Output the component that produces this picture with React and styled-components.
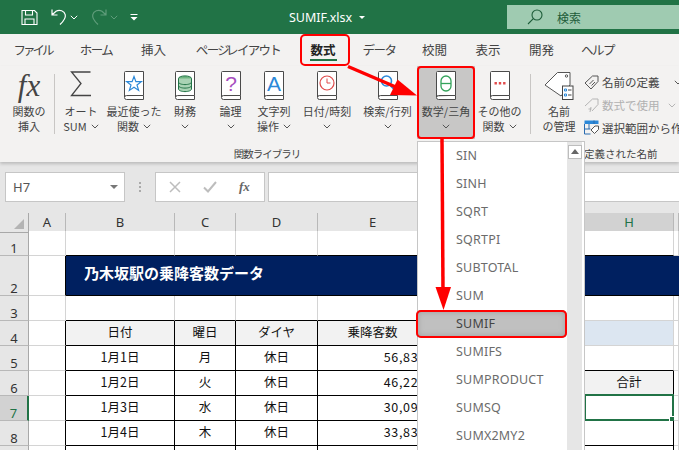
import styled, { createGlobalStyle } from 'styled-components';

const JP = `"Noto Sans CJK JP", "Noto Sans", sans-serif`;
const LATIN = `"Noto Sans", "Noto Sans CJK JP", sans-serif`;

const GlobalStyle = createGlobalStyle`
    html, body { margin: 0; padding: 0; background: #e6e6e6; }
    * { box-sizing: border-box; }
`;

const tabs = [
    { name: 'ファイル', w: 65, ls: -3 },
    { name: 'ホーム', w: 62, ls: -1.5 },
    { name: '挿入', w: 53, ls: 0 },
    { name: 'ページ レイアウト', w: 116, ls: -1.7 },
    { name: '数式', w: 54, ls: 0 },
    { name: 'データ', w: 58, ls: -1.5 },
    { name: '校閲', w: 53, ls: 0 },
    { name: '表示', w: 54, ls: 0 },
    { name: '開発', w: 53, ls: 0 },
    { name: 'ヘルプ', w: 59, ls: -1.5 },
];
const menuItems = ['SIN', 'SINH', 'SQRT', 'SQRTPI', 'SUBTOTAL', 'SUM', 'SUMIF', 'SUMIFS', 'SUMPRODUCT', 'SUMSQ', 'SUMX2MY2'];
const columns = ['A', 'B', 'C', 'D', 'E', 'F', 'G', 'H', 'I'];

const tableRows = [
    ['1月1日', '月', '休日', '56,836'],
    ['1月2日', '火', '休日', '46,229'],
    ['1月3日', '水', '休日', '30,095'],
    ['1月4日', '木', '休日', '33,839'],
];

function Chev({ color = '#555' }) {
    return (
        <svg width="8" height="5" viewBox="0 0 8 5" fill="none" stroke={color} strokeWidth="1">
            <path d="M.8.8 4 4l3.2-3.2" />
        </svg>
    );
}

function Book({ children }) {
    return (
        <svg width="22" height="29" viewBox="0 0 22 29" fill="none">
            <path d="M1.5 26V1.500a1 1 0 0 1 1-1h18v24H3.500a2 2 0 0 0-2 2 2 2 0 0 0 2 2h17v-4" fill="#fff" stroke="#4a4a4a" />
            {children}
        </svg>
    );
}

const StarBook = () => (
    <Book>
        <path d="M11 5.500l1.900 5.200h5.400l-4.300 3.300 1.600 5.400-4.600-3.200-4.600 3.200 1.600-5.400-4.300-3.300h5.400z" stroke="#2b88d8" strokeWidth="1.200" />
    </Book>
);
const MoneyBook = () => (
    <Book>
        <ellipse cx="11" cy="7.500" rx="6.500" ry="2.600" fill="#6cb47f" stroke="#217346" />
        <path d="M4.500 7.500V18c0 1.500 3 2.600 6.500 2.600s6.500-1.100 6.500-2.600V7.500M4.500 11c0 1.500 3 2.600 6.500 2.600s6.500-1.100 6.500-2.600M4.500 14.500c0 1.500 3 2.600 6.500 2.600s6.500-1.100 6.500-2.600" fill="#a9d3b4" stroke="#217346" />
    </Book>
);
const LogicBook = () => (
    <Book>
        <text x="11" y="20" textAnchor="middle" fontSize="21" fontFamily="Liberation Sans" fill="#a74fc0">?</text>
    </Book>
);
const TextBook = () => (
    <Book>
        <text x="11" y="20" textAnchor="middle" fontSize="21" fontFamily="Liberation Sans" fill="#2b88d8">A</text>
    </Book>
);
const ClockBook = () => (
    <Book>
        <circle cx="11" cy="12" r="7" fill="#fff" stroke="#e04a4a" strokeWidth="1.200" />
        <path d="M11 7.500V12h3.500" stroke="#e04a4a" />
    </Book>
);
const SearchBook = () => (
    <Book>
        <circle cx="9.500" cy="10" r="5" stroke="#2b88d8" strokeWidth="1.600" />
        <path d="M13 14l5 5" stroke="#2b88d8" strokeWidth="2" />
    </Book>
);
const ThetaBook = () => (
    <Book>
        <rect x="6" y="5" width="10" height="15" rx="5" stroke="#33a35a" strokeWidth="1.300" />
        <path d="M6 12.500h10" stroke="#33a35a" strokeWidth="1.300" />
    </Book>
);
const MoreBook = () => (
    <Book>
        <path d="M5.500 11h2.400v2.400H5.500zM9.800 11h2.400v2.400H9.800zM14.100 11h2.400v2.400h-2.400z" fill="#e04a4a" />
    </Book>
);

const ribbonButtons = [
    { w: 52, lines: ['オート', 'SUM'], chevOn: 1, icon: <svg width="22" height="26" viewBox="0 0 22 26" fill="none" stroke="#444" strokeWidth="1.300"><path d="M20.500 1H1.500L11 12.500 1.500 24.500H21" /></svg> },
    { w: 54, lines: ['最近使った', '関数'], chevOn: 1, icon: <StarBook /> },
    { w: 48, lines: ['財務'], chevOn: 2, icon: <MoneyBook /> },
    { w: 43, lines: ['論理'], chevOn: 2, icon: <LogicBook /> },
    { w: 44, lines: ['文字列', '操作'], chevOn: 1, icon: <TextBook /> },
    { w: 62, lines: ['日付/時刻'], chevOn: 2, icon: <ClockBook /> },
    { w: 59, lines: ['検索/行列'], chevOn: 2, icon: <SearchBook /> },
    { w: 58, lines: ['数学/三角'], chevOn: 2, icon: <ThetaBook />, marked: true },
    { w: 49, lines: ['その他の', '関数'], chevOn: 1, icon: <MoreBook /> },
];

export default function App() {
    function row(num, height, cells, active) {
        return (
            <SheetRow key={num} $h={height}>
                <RowHead $active={active}>{num}</RowHead>
                {cells}
            </SheetRow>
        );
    }

    function dataRow(num, values, active) {
        return row(num, 25, [
            <Cell key="a" $rb />,
            ...values.map((v, i) => <Cell key={i} $rb $bb $right={i === 3} $up>{v}</Cell>),
            <Cell key="f" />,
            <Cell key="g" $rb />,
            <Cell key="h" $rb $bb>{active && <Selection><FillHandle /></Selection>}</Cell>,
            <Cell key="i" />,
        ], active);
    }

    return (
        <Page>
            <GlobalStyle />
            <TitleBar>
                <Qat>
                    <svg width="17" height="17" viewBox="0 0 17 17" fill="none" stroke="#fff" strokeWidth="1.100">
                        <path d="M1 1.500h12.500l2.500 2.500v11.500H1zM4.500 1.500v4.500h7V1.500M4 15.500v-5.500h9v5.500" />
                    </svg>
                    <UndoWrap>
                        <svg width="16" height="18" viewBox="0 0 16 18" fill="none" stroke="#fff" strokeWidth="1.200">
                            <path d="M1 1.500V7h5.500M1.200 6.800 5 3.200c3.500-2 8.500-.4 9.300 3.600.6 3.400-1.600 6.200-5.300 9.700" />
                        </svg>
                        <Chev color="#fff" />
                    </UndoWrap>
                    <UndoWrap>
                        <svg width="16" height="18" viewBox="0 0 16 18" fill="none" stroke="#5f9c7a" strokeWidth="1.200">
                            <path d="M15 1.500V7H9.500M14.800 6.800 11 3.200C7.500 1.200 2.500 2.800 1.700 6.800c-.6 3.400 1.600 6.200 5.300 9.700" />
                        </svg>
                        <Chev color="#5f9c7a" />
                    </UndoWrap>
                    <svg width="8" height="8" viewBox="0 0 8 8" fill="#fff">
                        <path d="M.5 1h7v1h-7zM.5 4h7L4 7.500z" />
                    </svg>
                </Qat>
                <FileName>SUMIF.xlsx<FileCaret /></FileName>
                <SearchBox>
                    <svg width="16" height="16" viewBox="0 0 16 16" fill="none" stroke="#1d5c39" strokeWidth="1.100">
                        <circle cx="10" cy="6" r="5" />
                        <path d="M6.300 9.700 1 15" />
                    </svg>
                    <span>検索</span>
                </SearchBox>
            </TitleBar>

            <TabBar>
                {tabs.map((t) => (
                    <Tab key={t.name} $w={t.w} $ls={t.ls} $marked={t.name === '数式'}>{t.name}</Tab>
                ))}
            </TabBar>

            <Ribbon>
                <FormulaGroup>
                    <ButtonRow>
                        <RibbonButton $w={50}>
                            <IconSlot><FxIcon>fx</FxIcon></IconSlot>
                            <Label>関数の</Label>
                            <Label>挿入</Label>
                        </RibbonButton>
                        <VDivider />
                        {ribbonButtons.map((b) => (
                            <RibbonButton key={b.lines[0]} $w={b.w} $marked={b.marked}>
                                <IconSlot>{b.icon}</IconSlot>
                                {b.lines.map((l, i) => (
                                    <Label key={l}>{l}{b.chevOn === 1 && i === b.lines.length - 1 && <InlineChev><Chev /></InlineChev>}</Label>
                                ))}
                                {b.chevOn === 2 && <Label><Chev /></Label>}
                            </RibbonButton>
                        ))}
                    </ButtonRow>
                    <GroupLabel>関数ライブラリ</GroupLabel>
                </FormulaGroup>
                <VDivider />
                <NameGroup>
                    <ButtonRow>
                        <RibbonButton $w={50}>
                            <IconSlot>
                                <svg width="30" height="29" viewBox="0 0 30 29" fill="none">
                                    <path d="M1 14 13.500 1.500H26V14L17 25z" fill="#fff" stroke="#555" />
                                    <circle cx="22.500" cy="5" r="1.200" stroke="#555" />
                                    <rect x="18.500" y="15" width="10.500" height="13.500" fill="#fff" stroke="#444" />
                                    <path d="M20.500 18h2v2h-2zM20.500 23h2v2h-2z" stroke="#2b88d8" />
                                    <path d="M24 19h3.500M24 24h3.500" stroke="#444" />
                                </svg>
                            </IconSlot>
                            <Label>名前</Label>
                            <Label>の管理</Label>
                        </RibbonButton>
                        <SmallColumn>
                            <SmallRow>
                                <svg width="15" height="15" viewBox="0 0 15 15" fill="none" stroke="#555">
                                    <path d="M1 8 8.500 1H14v5.500L7 14zM5.500 9l4-4M7.500 10.500l3.500-3.500" />
                                </svg>
                                <span>名前の定義</span>
                                <SmallChev $gap={11}><Chev /></SmallChev>
                            </SmallRow>
                            <SmallRow $muted>
                                <svg width="15" height="15" viewBox="0 0 15 15" fill="none" stroke="#b5b5b5">
                                    <path d="M1 8 8.500 1H14v5.500L8 13" />
                                    <path d="M6 14l1-5M4.500 11h3" />
                                </svg>
                                <span>数式で使用</span>
                                <SmallChev $gap={5}><Chev color="#b5b5b5" /></SmallChev>
                            </SmallRow>
                            <SmallRow>
                                <svg width="15" height="15" viewBox="0 0 15 15" fill="none">
                                    <path d="M.5.500h14v3.500H.5z" fill="#2b88d8" />
                                    <path d="M.5 4v10h6M.5 9h6M5 4v5M10 .5V4" stroke="#2b6cb0" />
                                    <path d="M7 10l4-4h3.500v3.500l-4 4z" fill="#fff" stroke="#555" />
                                </svg>
                                <span>選択範囲から作成</span>
                            </SmallRow>
                        </SmallColumn>
                    </ButtonRow>
                    <NameLabel>定義された名前</NameLabel>
                </NameGroup>
            </Ribbon>

            <FormulaBar>
                <NameBox>
                    <span>H7</span>
                    <NameCaret />
                </NameBox>
                <Grip>
                    <i /><i /><i />
                </Grip>
                <FxBox>
                    <svg width="12" height="12" viewBox="0 0 12 12" fill="none" stroke="#bdbdbd" strokeWidth="1.500">
                        <path d="M1 1l10 10M11 1 1 11" />
                    </svg>
                    <svg width="14" height="12" viewBox="0 0 14 12" fill="none" stroke="#bdbdbd" strokeWidth="2">
                        <path d="M1 6.500 5 10.500 13 1" />
                    </svg>
                    <SmallFx>fx</SmallFx>
                </FxBox>
                <FormulaInput />
            </FormulaBar>

            <Sheet>
                <HeaderRow>
                    <Corner><CornerMark /></Corner>
                    {columns.map((c) => (
                        <ColHead key={c} $active={c === 'H'}>{c === 'I' ? '' : c}</ColHead>
                    ))}
                </HeaderRow>

                {row(1, 25, columns.map((c) => <Cell key={c} $bb={c !== 'A' && c !== 'I'} />))}
                {row(2, 40, [
                    <Cell key="a" $rb />,
                    <BannerCell key="b"><BannerText>乃木坂駅の乗降客数データ</BannerText></BannerCell>,
                    ...columns.slice(2).map((c) => <BannerCell key={c} />),
                ])}
                {row(3, 25, columns.map((c) => <Cell key={c} $bb={'BCDE'.includes(c)} />))}
                {row(4, 25, [
                    <Cell key="a" $rb />,
                    <Cell key="b" $rb $bb $bg="#f2f2f2" $up>日付</Cell>,
                    <Cell key="c" $rb $bb $bg="#f2f2f2" $up>曜日</Cell>,
                    <Cell key="d" $rb $bb $bg="#f2f2f2" $up>ダイヤ</Cell>,
                    <Cell key="e" $rb $bb $bg="#f2f2f2" $up>乗降客数</Cell>,
                    <Cell key="f" $bg="#dce6f1" />,
                    <Cell key="g" $bg="#dce6f1" />,
                    <Cell key="h" $bg="#dce6f1" />,
                    <Cell key="i" />,
                ])}
                {row(5, 25, [
                    <Cell key="a" $rb />,
                    ...tableRows[0].map((v, i) => <Cell key={i} $rb $bb $right={i === 3} $up>{v}</Cell>),
                    <Cell key="f" />,
                    <Cell key="g" />,
                    <Cell key="h" $bb />,
                    <Cell key="i" />,
                ])}
                {row(6, 25, [
                    <Cell key="a" $rb />,
                    ...tableRows[1].map((v, i) => <Cell key={i} $rb $bb $right={i === 3} $up>{v}</Cell>),
                    <Cell key="f" />,
                    <Cell key="g" $rb />,
                    <Cell key="h" $rb $bb $bg="#f2f2f2" $up>合計</Cell>,
                    <Cell key="i" />,
                ])}
                {dataRow(7, tableRows[2], true)}
                {dataRow(8, tableRows[3])}
                {dataRow('', ['', '', '', ''])}
            </Sheet>

            <FunctionMenu>
                <MenuList>
                    {menuItems.map((m) => (
                        <MenuItem key={m} $marked={m === 'SUMIF'}>{m}</MenuItem>
                    ))}
                </MenuList>
                <MenuScroll>
                    <ScrollUp />
                </MenuScroll>
            </FunctionMenu>

            <Arrows width="679" height="450" viewBox="0 0 679 450">
                <path d="M348 66.500 397 87.500" stroke="#ff0000" strokeWidth="3.500" />
                <path d="M417 95.500 390 95 397.500 79.500z" fill="#ff0000" />
                <path d="M442 139 443 290" stroke="#ff0000" strokeWidth="3.500" />
                <path d="M443.500 310 435.500 287H451z" fill="#ff0000" />
            </Arrows>
        </Page>
    );
}

const Page = styled.div`
    position: relative;
    width: 679px;
    height: 450px;
    overflow: hidden;
    background: #e6e6e6;
    font-family: ${JP};
    color: #444;
`;

const TitleBar = styled.div`
    height: 34px;
    background: #217346;
    display: flex;
    align-items: center;
    position: relative;
`;

const Qat = styled.div`
    display: flex;
    align-items: center;
    padding-left: 21px;
    gap: 13px;
    width: 289px;

    & > svg:last-child {
        margin-left: -1px;
    }
`;

const UndoWrap = styled.div`
    display: flex;
    align-items: center;
    gap: 3px;
`;

const FileName = styled.div`
    font-family: ${LATIN};
    font-size: 12.500px;
    color: #fff;
    width: 218px;
    display: flex;
    align-items: center;
`;

const FileCaret = styled.span`
    width: 0;
    height: 0;
    margin-left: 7px;
    border-left: 3px solid transparent;
    border-right: 3px solid transparent;
    border-top: 3px solid #fff;
`;

const SearchBox = styled.div`
    width: 172px;
    height: 24px;
    background: #9fcbb1;
    display: flex;
    align-items: center;
    padding-left: 20px;
    gap: 14px;
    font-size: 12px;
    color: #1d5c39;
`;

const TabBar = styled.div`
    height: 32px;
    background: #f3f2f1;
    display: flex;
`;

const Tab = styled.div`
    position: relative;
    flex: none;
    width: ${(p) => p.$w}px;
    text-align: center;
    font-size: 12.500px;
    line-height: 31px;
    letter-spacing: ${(p) => p.$ls}px;
    color: ${(p) => (p.$marked ? '#222' : '#444')};
    font-weight: ${(p) => (p.$marked ? 700 : 400)};
    white-space: nowrap;
    word-spacing: -3px;

    ${(p) => p.$marked && `
        &::before {
            content: '';
            position: absolute;
            left: 14px;
            right: 13px;
            bottom: 5px;
            height: 2px;
            background: #217346;
        }
        &::after {
            content: '';
            position: absolute;
            left: 4px;
            right: 0;
            top: 0;
            bottom: 0;
            border: 2px solid #f00;
            border-radius: 5px;
        }
    `}
`;

const Ribbon = styled.div`
    height: 96px;
    background: #f3f2f1;
    display: flex;
    padding-left: 4px;
    box-shadow: 0 2px 3px rgba(0, 0, 0, 0.18);
    position: relative;
`;

const FormulaGroup = styled.div`
    width: 526px;
    display: flex;
    flex-direction: column;
`;

const NameGroup = styled.div`
    flex: 1;
    min-width: 0;
    padding-left: 3px;
    display: flex;
    flex-direction: column;
    white-space: nowrap;
`;

const ButtonRow = styled.div`
    display: flex;
    height: 73px;
`;

const RibbonButton = styled.div`
    position: relative;
    flex: none;
    width: ${(p) => p.$w}px;
    height: 73px;
    padding-top: 5px;
    display: flex;
    flex-direction: column;
    align-items: center;
    background: ${(p) => (p.$marked ? '#c8c7c6' : 'transparent')};
    ${(p) => p.$marked && `
        &::after {
            content: '';
            position: absolute;
            inset: 0;
            border: 2px solid #f00;
            border-radius: 4px;
        }
    `}
`;

const IconSlot = styled.div`
    height: 33px;
    display: flex;
    align-items: flex-start;
    justify-content: center;
    flex: none;
`;

const FxIcon = styled.span`
    font-family: "Liberation Serif", serif;
    font-style: italic;
    font-size: 31px;
    line-height: 29px;
    color: #444;
`;

const Label = styled.div`
    font-size: 11px;
    line-height: 15px;
    height: 15px;
    color: #444;
    white-space: nowrap;
    display: flex;
    align-items: center;
    justify-content: center;
`;

const InlineChev = styled.span`
    display: inline-flex;
    margin-left: 4px;
`;

const VDivider = styled.div`
    flex: none;
    width: 1px;
    height: 60px;
    margin: 8px 0 0;
    background: #c8c6c4;
`;

const GroupLabel = styled.div`
    font-size: 10.500px;
    line-height: 14px;
    margin-top: 8px;
    letter-spacing: -1px;
    text-align: center;
    color: #444;
`;

const NameLabel = styled.div`
    font-size: 10.500px;
    line-height: 14px;
    margin-top: 8px;
    padding-left: 50px;
    color: #444;
`;

const SmallColumn = styled.div`
    padding-top: 5px;
    display: flex;
    flex-direction: column;
`;

const SmallRow = styled.div`
    display: flex;
    align-items: center;
    gap: 3px;
    height: 23px;
    font-size: 11.500px;
    color: ${(p) => (p.$muted ? '#b1b1b1' : '#444')};
`;

const SmallChev = styled.span`
    display: inline-flex;
    margin-left: ${(p) => p.$gap}px;
`;

const FormulaBar = styled.div`
    height: 51px;
    padding: 10px 0 11px 5px;
    display: flex;
`;

const NameBox = styled.div`
    width: 120px;
    background: #fff;
    border: 1px solid #c6c6c6;
    display: flex;
    align-items: center;
    justify-content: space-between;
    padding: 0 6px 0 7px;
    font-family: ${LATIN};
    font-size: 13px;
    color: #555;
`;

const NameCaret = styled.span`
    width: 0;
    height: 0;
    border-left: 4px solid transparent;
    border-right: 4px solid transparent;
    border-top: 4px solid #777;
`;

const Grip = styled.div`
    width: 30px;
    display: flex;
    flex-direction: column;
    align-items: center;
    justify-content: center;
    gap: 2px;

    i {
        width: 2px;
        height: 2px;
        background: #aaa;
    }
`;

const FxBox = styled.div`
    width: 110px;
    background: #fff;
    border: 1px solid #c6c6c6;
    display: flex;
    align-items: center;
    padding-left: 13px;
    gap: 22px;
`;

const SmallFx = styled.span`
    font-family: "Liberation Serif", serif;
    font-style: italic;
    font-weight: 700;
    font-size: 13px;
    color: #666;
`;

const FormulaInput = styled.div`
    flex: 1;
    margin-left: 3px;
    background: #fff;
    border: 1px solid #c6c6c6;
    border-right: 0;
`;

const SHEET_COLS = '29px 37px 109px 61px 82px 110px 80px 77px 89px 5px';

const Sheet = styled.div`
    width: 679px;
    background: #fff;
`;

const SheetRow = styled.div`
    display: grid;
    grid-template-columns: ${SHEET_COLS};
    height: ${(p) => p.$h}px;
`;

const HeaderRow = styled.div`
    display: grid;
    grid-template-columns: ${SHEET_COLS};
    height: 18px;
    background: #e6e6e6;
`;

const Corner = styled.div`
    position: relative;
    border-right: 1px solid #a8a8a8;
    border-bottom: 1px solid #a8a8a8;
`;

const CornerMark = styled.span`
    position: absolute;
    right: 4px;
    bottom: 3px;
    width: 0;
    height: 0;
    border-left: 10px solid transparent;
    border-bottom: 10px solid #b4b4b4;
`;

const ColHead = styled.div`
    font-family: ${LATIN};
    font-size: 13px;
    line-height: 18px;
    text-align: center;
    background: ${(p) => (p.$active ? '#d2d2d2' : 'transparent')};
    color: ${(p) => (p.$active ? '#217346' : '#333')};
    border-right: 1px solid #b8b8b8;
    border-bottom: ${(p) => (p.$active ? '2px solid #217346' : '1px solid #a8a8a8')};
`;

const RowHead = styled.div`
    font-family: ${LATIN};
    font-size: 13px;
    line-height: 13px;
    text-align: center;
    display: flex;
    align-items: flex-end;
    justify-content: center;
    background: ${(p) => (p.$active ? '#d2d2d2' : '#e6e6e6')};
    color: ${(p) => (p.$active ? '#217346' : '#333')};
    border-bottom: 1px solid #b8b8b8;
    border-right: ${(p) => (p.$active ? '2px solid #217346' : '1px solid #a8a8a8')};
`;

const Cell = styled.div`
    position: relative;
    min-width: 0;
    font-size: 12.500px;
    color: #111;
    background: ${(p) => p.$bg || '#fff'};
    border-right: 1px solid ${(p) => (p.$rb ? '#000' : '#d4d4d4')};
    border-bottom: 1px solid ${(p) => (p.$bb ? '#000' : '#d4d4d4')};
    display: flex;
    align-items: center;
    justify-content: ${(p) => (p.$right ? 'flex-end' : 'center')};
    padding-right: ${(p) => (p.$right ? '1px' : '0')};
    padding-bottom: ${(p) => (p.$up ? '4px' : '0')};
    letter-spacing: ${(p) => (p.$right ? '0.700px' : '0')};
    white-space: nowrap;
`;

const BannerCell = styled.div`
    background: #002060;
    border-bottom: 1px solid #000;
    min-width: 0;
`;

const BannerText = styled.div`
    position: relative;
    z-index: 1;
    padding: 5px 0 0 18px;
    font-size: 15px;
    line-height: 24px;
    font-weight: 700;
    color: #fff;
    white-space: nowrap;
`;

const Selection = styled.div`
    position: absolute;
    inset: -2px -1px -1px -1px;
    border: 2px solid #217346;
`;

const FillHandle = styled.span`
    position: absolute;
    right: -4px;
    bottom: -4px;
    width: 6px;
    height: 6px;
    background: #217346;
    outline: 1px solid #fff;
`;

const FunctionMenu = styled.div`
    position: absolute;
    z-index: 2;
    left: 417px;
    top: 141px;
    width: 168px;
    height: 330px;
    display: flex;
    background: #fff;
    border: 1px solid #c6c6c6;
`;

const MenuList = styled.div`
    flex: 1;
    min-width: 0;
`;

const MenuItem = styled.div`
    position: relative;
    height: 28px;
    line-height: 27px;
    padding-left: 38px;
    font-family: ${LATIN};
    font-size: 12.500px;
    letter-spacing: 0.200px;
    color: ${(p) => (p.$marked ? '#444' : '#6b6b6b')};
    background: ${(p) => (p.$marked ? '#c0c0c0' : 'transparent')};
    ${(p) => p.$marked && `
        margin-left: -2px;
        padding-left: 40px;
        border-radius: 5px;
        box-shadow: inset 0 0 0 2px #f00, inset 0 0 5px 3px #a8a8a8;
    `}
`;

const MenuScroll = styled.div`
    flex: none;
    width: 15px;
    margin-right: 2px;
    background: #e6e6e6;
    padding: 3px 0 0 1px;
`;

const ScrollUp = styled.div`
    position: relative;
    width: 14px;
    height: 14px;
    background: #fff;
    border: 1px solid #bdbdbd;

    &::after {
        content: '';
        position: absolute;
        left: 2px;
        top: 3px;
        border-left: 4px solid transparent;
        border-right: 4px solid transparent;
        border-bottom: 5px solid #666;
    }
`;

const Arrows = styled.svg`
    position: absolute;
    z-index: 3;
    left: 0;
    top: 0;
    pointer-events: none;
`;
